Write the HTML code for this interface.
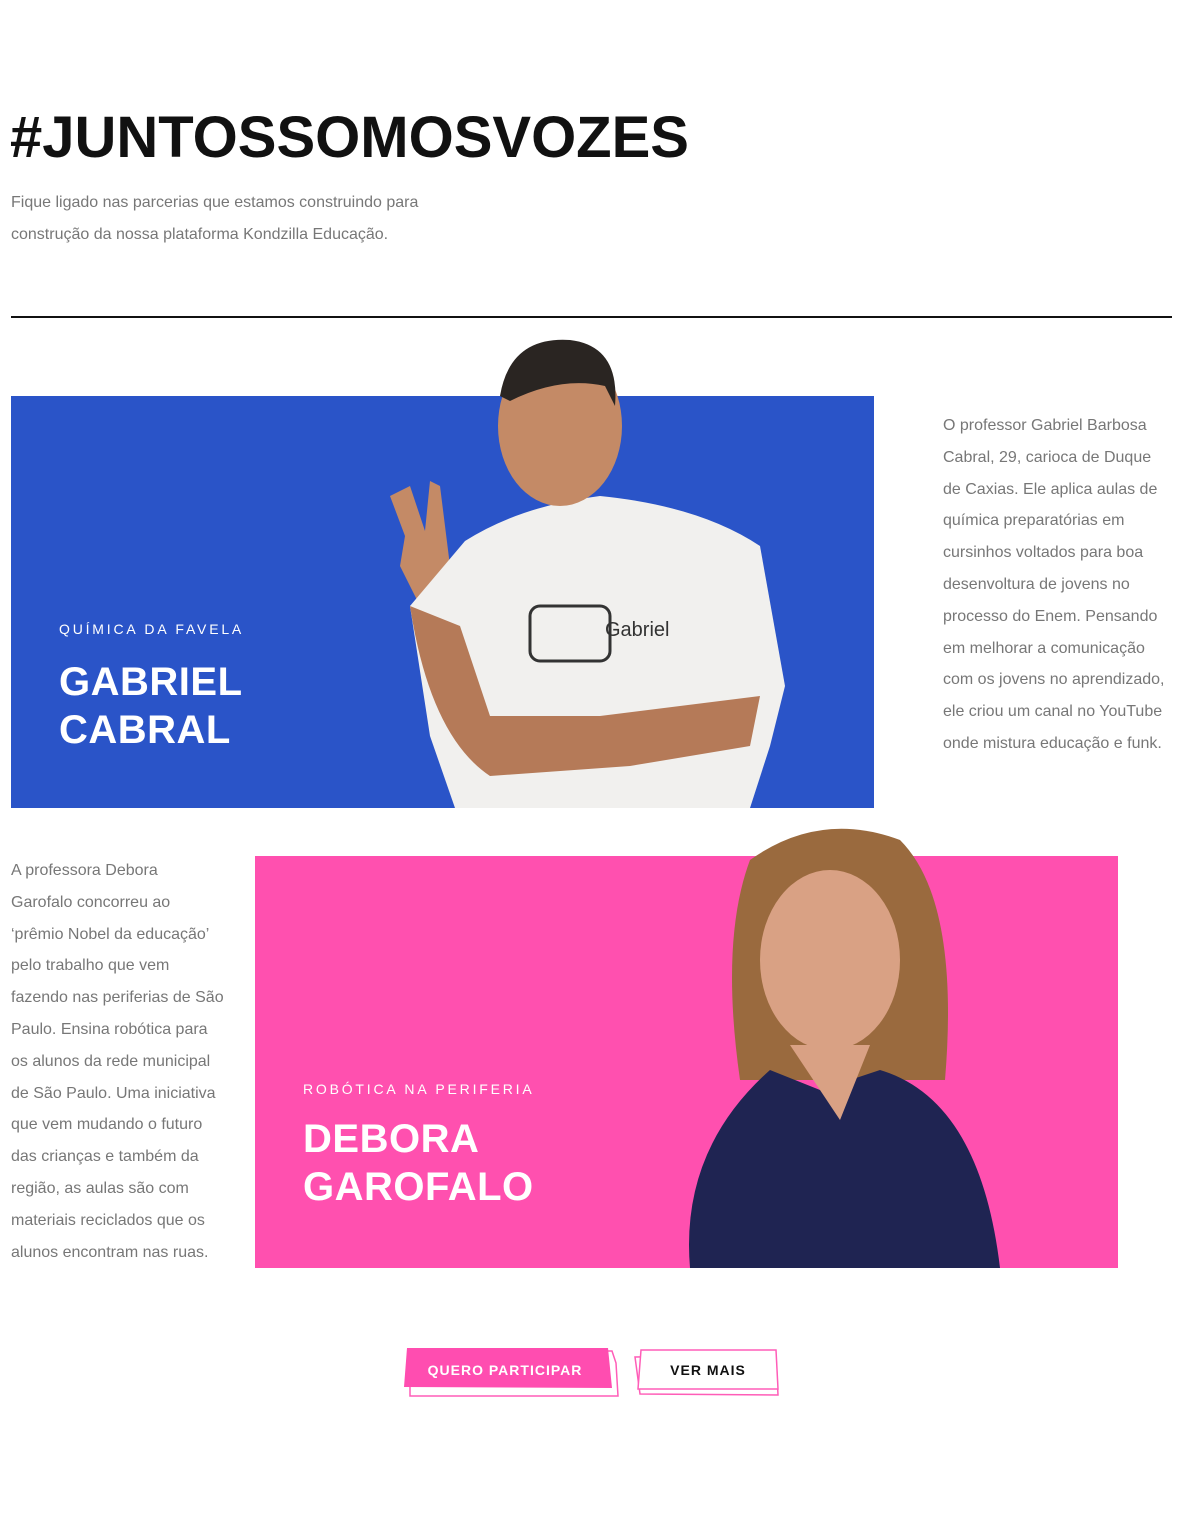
<!DOCTYPE html>
<html><head><meta charset="utf-8"><style>
*{margin:0;padding:0;box-sizing:border-box}
body{width:1178px;height:1518px;background:#fff;font-family:"Liberation Sans",sans-serif;position:relative;overflow:hidden}
.abs{position:absolute}
h1{position:absolute;left:10px;top:104px;font-size:58px;font-weight:bold;color:#111;letter-spacing:0px;white-space:nowrap}
.p{color:#777;font-size:16px;line-height:31.8px;white-space:nowrap}
.label{color:#fff;font-size:14px;letter-spacing:2.8px}
.name{color:#fff;font-size:40px;font-weight:bold;line-height:48px;letter-spacing:0.5px}
.btn{position:absolute;font-weight:bold;font-size:15px;letter-spacing:1px;text-align:center;line-height:40px}
</style></head><body>
<h1>#JUNTOSSOMOSVOZES</h1>
<div class="abs p" style="left:11px;top:187px">Fique ligado nas parcerias que estamos construindo para<br>construção da nossa plataforma Kondzilla Educação.</div>
<div class="abs" style="left:11px;top:316px;width:1161px;height:2px;background:#111"></div>

<div class="abs" style="left:11px;top:396px;width:863px;height:412px;background:#2a54c8"></div>
<svg class="abs" style="left:370px;top:336px" width="430" height="472" viewBox="0 0 430 472">
<path d="M40 150 L20 160 L35 200 L30 230 L50 270 L70 265 L80 230 L70 150 L60 145 L55 195 Z" fill="#c48a66"/>
<path d="M95 205 Q150 170 230 160 Q330 170 390 210 L415 350 L400 410 L380 472 L85 472 L60 400 L40 270 Z" fill="#f1f0ee"/>
<path d="M40 270 Q60 400 120 440 L260 430 L380 410 L390 360 L230 380 L120 380 L90 290 Z" fill="#b57a58"/>
<ellipse cx="190" cy="90" rx="62" ry="80" fill="#c48a66"/>
<path d="M130 60 Q140 0 200 4 Q250 10 245 70 L235 50 Q190 40 140 65 Z" fill="#2a2522"/>
<rect x="160" y="270" width="80" height="55" rx="10" fill="none" stroke="#333" stroke-width="3"/>
<text x="235" y="300" font-size="20" font-family="Liberation Sans" fill="#333">Gabriel</text>
</svg>
<div class="abs label" style="left:59px;top:621px">QUÍMICA DA FAVELA</div>
<div class="abs name" style="left:59px;top:658px">GABRIEL<br>CABRAL</div>
<div class="abs p" style="left:943px;top:410px">O professor Gabriel Barbosa<br>Cabral, 29, carioca de Duque<br>de Caxias. Ele aplica aulas de<br>química preparatórias em<br>cursinhos voltados para boa<br>desenvoltura de jovens no<br>processo do Enem. Pensando<br>em melhorar a comunicação<br>com os jovens no aprendizado,<br>ele criou um canal no YouTube<br>onde mistura educação e funk.</div>

<div class="abs p" style="left:11px;top:855px">A professora Debora<br>Garofalo concorreu ao<br>‘prêmio Nobel da educação’<br>pelo trabalho que vem<br>fazendo nas periferias de São<br>Paulo. Ensina robótica para<br>os alunos da rede municipal<br>de São Paulo. Uma iniciativa<br>que vem mudando o futuro<br>das crianças e também da<br>região, as aulas são com<br>materiais reciclados que os<br>alunos encontram nas ruas.</div>
<div class="abs" style="left:255px;top:856px;width:863px;height:412px;background:#ff50af"></div>
<svg class="abs" style="left:670px;top:820px" width="340" height="448" viewBox="0 0 340 448">
<path d="M80 40 Q150 -10 230 20 Q290 80 275 260 L70 260 Q50 120 80 40 Z" fill="#9a6a3e"/>
<ellipse cx="160" cy="140" rx="70" ry="90" fill="#d9a184"/>
<path d="M20 448 Q10 330 100 250 L150 270 L210 250 Q310 280 330 448 Z" fill="#1f2452"/>
<path d="M120 225 L200 225 L170 300 Z" fill="#d9a184"/>
</svg>
<div class="abs label" style="left:303px;top:1081px">ROBÓTICA NA PERIFERIA</div>
<div class="abs name" style="left:303px;top:1115px">DEBORA<br>GAROFALO</div>

<svg class="abs" style="left:400px;top:1345px" width="385" height="55">
<polygon points="10,6 212,6 216,18 218,51 10,51" fill="#fff" stroke="#ff5db8" stroke-width="1.5"/>
<polygon points="7,3 208,3 212,43 4,42" fill="#ff4db0"/>
<polygon points="235,12 240,49 378,50 376,10" fill="#fff" stroke="#ff5db8" stroke-width="1.5"/>
<polygon points="241,5 376,5 378,44 238,44" fill="#fff" stroke="#ff5db8" stroke-width="1.5"/>
</svg>
<div class="btn" style="left:404px;top:1350px;width:202px;color:#fff;font-size:14px">QUERO PARTICIPAR</div>
<div class="btn" style="left:638px;top:1350px;width:140px;color:#111;font-size:14px">VER MAIS</div>
</body></html>
